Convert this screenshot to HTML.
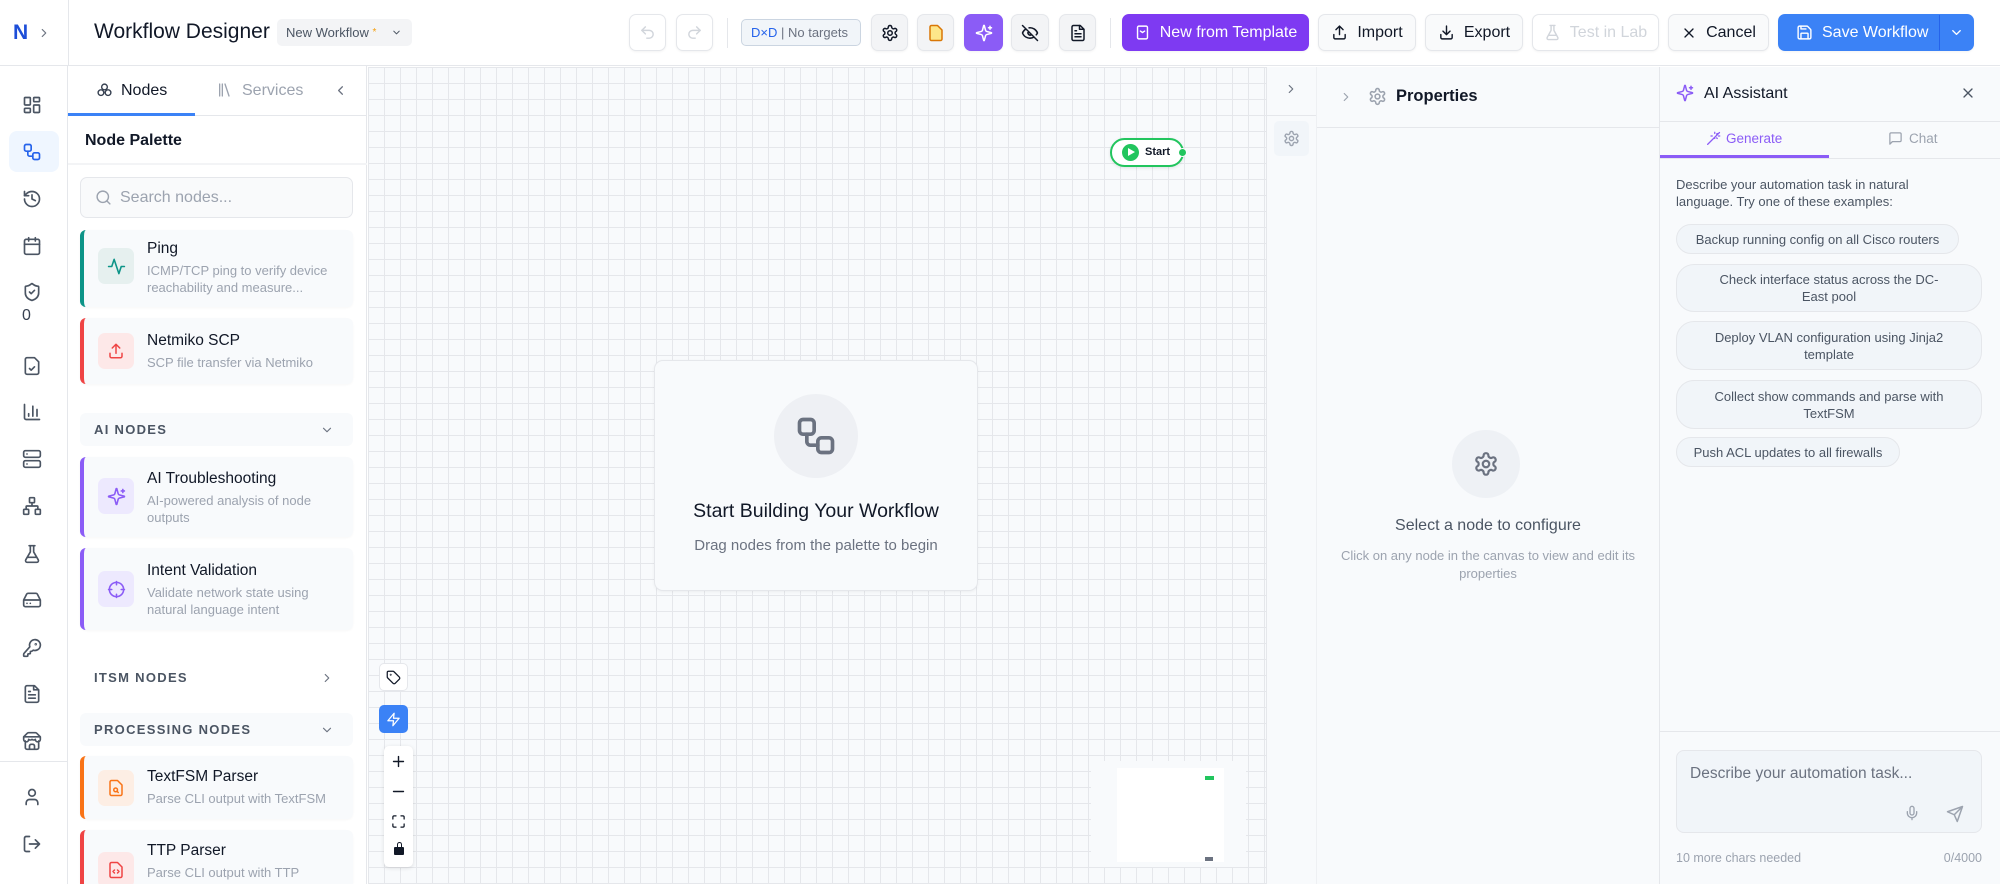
<!DOCTYPE html>
<html style="height:884px;overflow:hidden"><head><meta charset="utf-8"><style>
*{box-sizing:border-box;margin:0;padding:0}
html,body{width:2000px;height:884px;overflow:hidden}
body{font-family:"Liberation Sans",sans-serif;background:#fff;position:relative;color:#111827}
.a{position:absolute}
svg{display:block}
.ic{fill:none;stroke:currentColor;stroke-width:2;stroke-linecap:round;stroke-linejoin:round}
.hb{position:absolute;top:14px;height:37px;border:1px solid #e5e7eb;border-radius:7px;background:#f9fafb;display:flex;align-items:center;justify-content:center;color:#111827;font-size:16px;gap:9px;box-shadow:0 1px 2px rgba(0,0,0,.05)}
.rail{position:absolute;left:22px;width:20px;height:20px;color:#4b5563}
.card{position:absolute;left:80px;width:273px;background:#f8fafc;border-radius:6px;border-left:4px solid;box-shadow:0 1px 2px rgba(0,0,0,.03)}
.card .ib{position:absolute;left:14px;width:36px;height:36px;border-radius:7px;display:flex;align-items:center;justify-content:center}
.card .t{position:absolute;left:63px;font-size:15.5px;color:#111827}
.card .d{position:absolute;left:63px;font-size:13px;color:#9ca3af;line-height:17px;width:200px}
.sec{position:absolute;left:80px;width:273px;height:33px;border-radius:6px;font-size:13px;letter-spacing:1.3px;color:#4b5563;font-weight:bold;padding-left:14px;line-height:33px}
.chip{position:absolute;left:1676px;border:1px solid #e5e7eb;background:#f1f5f9;border-radius:18px;font-size:13px;color:#4b5563;text-align:center;line-height:17px;display:flex;align-items:center;justify-content:center;padding:0 12px}
.chip.w{padding:0 30px}
.cb{position:absolute;width:29px;background:#fff;border:1px solid #e5e7eb;display:flex;align-items:center;justify-content:center;color:#111827}
</style></head><body>

<!-- header -->
<div class="a" style="left:0;top:0;width:2000px;height:66px;border-bottom:1px solid #e5e7eb;background:#fff"></div>
<div class="a" style="left:68px;top:0;width:1px;height:66px;background:#e5e7eb"></div>
<div class="a" style="left:13px;top:21px;font-size:21px;font-weight:bold;color:#1d4ed8">N</div>
<svg class="a ic" style="left:37px;top:25px;color:#6b7280" width="14" height="16" viewBox="0 0 24 24"><path d="M9 6l6 6-6 6"/></svg>
<div class="a" style="left:94px;top:20px;font-size:21px;color:#111827">Workflow Designer</div>
<div class="a" style="left:277px;top:19px;width:135px;height:27px;background:#f3f4f6;border-radius:5px;font-size:13px;color:#4b5563;line-height:27px;padding-left:9px">New Workflow <span style="color:#f59e0b;font-size:10px;vertical-align:top">*</span>
<svg class="a ic" style="left:114px;top:8px" width="11" height="11" viewBox="0 0 24 24"><path d="M6 9l6 6 6-6"/></svg></div>

<div class="hb" style="left:629px;width:37px;color:#d1d5db;background:#fff"><svg class="ic" width="17" height="17" viewBox="0 0 24 24"><path d="M9 14L4 9l5-5"/><path d="M4 9h10.5a5.5 5.5 0 0 1 0 11H11"/></svg></div>
<div class="hb" style="left:676px;width:37px;color:#d1d5db;background:#fff"><svg class="ic" width="17" height="17" viewBox="0 0 24 24"><path d="M15 14l5-5-5-5"/><path d="M20 9H9.5a5.5 5.5 0 0 0 0 11H13"/></svg></div>
<div class="a" style="left:727px;top:18px;width:1px;height:30px;background:#e5e7eb"></div>
<div class="a" style="left:741px;top:19px;width:120px;height:27px;border:1px solid #cbd5e1;background:#f1f5f9;border-radius:5px;font-size:13px;line-height:25px;padding-left:9px;color:#6b7280"><span style="color:#2563eb">D×D</span> | No targets</div>
<div class="hb" style="left:871px;width:37px;background:#f3f4f6"><svg class="ic" width="18" height="18" viewBox="0 0 24 24"><circle cx="12" cy="12" r="3"/><path d="M12.2 2h-.4a2 2 0 0 0-2 2v.2a2 2 0 0 1-1 1.7l-.4.3a2 2 0 0 1-2 0l-.2-.1a2 2 0 0 0-2.7.7l-.2.4a2 2 0 0 0 .7 2.7l.2.1a2 2 0 0 1 1 1.7v.5a2 2 0 0 1-1 1.7l-.2.1a2 2 0 0 0-.7 2.7l.2.4a2 2 0 0 0 2.7.7l.2-.1a2 2 0 0 1 2 0l.4.3a2 2 0 0 1 1 1.7v.2a2 2 0 0 0 2 2h.4a2 2 0 0 0 2-2v-.2a2 2 0 0 1 1-1.7l.4-.3a2 2 0 0 1 2 0l.2.1a2 2 0 0 0 2.7-.7l.2-.4a2 2 0 0 0-.7-2.7l-.2-.1a2 2 0 0 1-1-1.7v-.5a2 2 0 0 1 1-1.7l.2-.1a2 2 0 0 0 .7-2.7l-.2-.4a2 2 0 0 0-2.7-.7l-.2.1a2 2 0 0 1-2 0l-.4-.3a2 2 0 0 1-1-1.7V4a2 2 0 0 0-2-2z"/></svg></div>
<div class="hb" style="left:917px;width:37px;background:#f3f4f6;color:#d97706"><svg class="ic" width="18" height="18" viewBox="0 0 24 24"><path d="M14 2H6a2 2 0 0 0-2 2v16a2 2 0 0 0 2 2h12a2 2 0 0 0 2-2V8z" fill="#fde68a"/></svg></div>
<div class="hb" style="left:964px;width:39px;background:#8b5cf6;border-color:#8b5cf6;color:#fff"><svg class="ic" width="18" height="18" viewBox="0 0 24 24"><path d="M9.9 15.5a2 2 0 0 0-1.4-1.4L2.4 12.5a.5.5 0 0 1 0-1l6.1-1.6a2 2 0 0 0 1.4-1.4l1.6-6.1a.5.5 0 0 1 1 0l1.6 6.1a2 2 0 0 0 1.4 1.4l6.1 1.6a.5.5 0 0 1 0 1l-6.1 1.6a2 2 0 0 0-1.4 1.4l-1.6 6.1a.5.5 0 0 1-1 0z"/><path d="M20 3v4M22 5h-4"/></svg></div>
<div class="hb" style="left:1011px;width:38px;background:#f3f4f6"><svg class="ic" width="18" height="18" viewBox="0 0 24 24"><path d="M10.7 5.1A10.7 10.7 0 0 1 22 12a10.7 10.7 0 0 1-1.7 2.4M6.6 6.6A10.7 10.7 0 0 0 2 12a10.7 10.7 0 0 0 15.4 5.4M14.1 14.2a3 3 0 0 1-4.2-4.2M2 2l20 20"/></svg></div>
<div class="hb" style="left:1059px;width:37px;background:#f3f4f6"><svg class="ic" width="18" height="18" viewBox="0 0 24 24"><path d="M15 2H6a2 2 0 0 0-2 2v16a2 2 0 0 0 2 2h12a2 2 0 0 0 2-2V7z"/><path d="M14 2v5h5M16 13H8M16 17H8M10 9H8"/></svg></div>
<div class="a" style="left:1110px;top:18px;width:1px;height:30px;background:#e5e7eb"></div>
<div class="hb" style="left:1122px;width:187px;background:#7e3af2;border-color:#7e3af2;color:#fff"><svg class="ic" width="17" height="17" viewBox="0 0 24 24"><rect x="5" y="3" width="14" height="18" rx="2"/><path d="M9 10l3 2 3-2"/></svg>New from Template</div>
<div class="hb" style="left:1318px;width:98px"><svg class="ic" width="17" height="17" viewBox="0 0 24 24"><path d="M12 15V3M7 8l5-5 5 5M4 15v4a2 2 0 0 0 2 2h12a2 2 0 0 0 2-2v-4"/></svg>Import</div>
<div class="hb" style="left:1425px;width:98px"><svg class="ic" width="17" height="17" viewBox="0 0 24 24"><path d="M12 3v12M7 10l5 5 5-5M4 15v4a2 2 0 0 0 2 2h12a2 2 0 0 0 2-2v-4"/></svg>Export</div>
<div class="hb" style="left:1532px;width:127px;background:#fff;color:#d1d5db"><svg class="ic" width="17" height="17" viewBox="0 0 24 24"><path d="M10 2v7L4.5 19a2 2 0 0 0 1.7 3h11.6a2 2 0 0 0 1.7-3L14 9V2M8.5 2h7M7 16h10"/></svg>Test in Lab</div>
<div class="hb" style="left:1668px;width:101px"><svg class="ic" width="16" height="16" viewBox="0 0 24 24"><path d="M18 6L6 18M6 6l12 12"/></svg>Cancel</div>
<div class="hb" style="left:1778px;width:196px;background:#3b82f6;border-color:#3b82f6;color:#fff;justify-content:flex-start;padding-left:17px"><svg class="ic" width="17" height="17" viewBox="0 0 24 24"><path d="M15.2 3a2 2 0 0 1 1.4.6l3.8 3.8a2 2 0 0 1 .6 1.4V19a2 2 0 0 1-2 2H5a2 2 0 0 1-2-2V5a2 2 0 0 1 2-2z"/><path d="M17 21v-7a1 1 0 0 0-1-1H8a1 1 0 0 0-1 1v7M7 3v4h7"/></svg>Save Workflow
<div class="a" style="left:160px;top:0;width:1px;height:35px;background:#2563eb"></div>
<svg class="a ic" style="left:170px;top:10px" width="15" height="15" viewBox="0 0 24 24"><path d="M6 9l6 6 6-6"/></svg></div>

<!-- left rail -->
<div class="a" style="left:0;top:66px;width:68px;height:818px;background:#fff;border-right:1px solid #e5e7eb"></div>
<div class="a" style="left:9px;top:131px;width:50px;height:41px;background:#eff6ff;border-radius:8px"></div>
<svg class="rail ic" style="top:95px" viewBox="0 0 24 24"><rect x="3" y="3" width="7" height="9" rx="1"/><rect x="14" y="3" width="7" height="5" rx="1"/><rect x="14" y="12" width="7" height="9" rx="1"/><rect x="3" y="16" width="7" height="5" rx="1"/></svg>
<svg class="rail ic" style="top:142px;color:#2563eb" viewBox="0 0 24 24"><rect x="3" y="3" width="8" height="8" rx="2"/><path d="M7 11v4a2 2 0 0 0 2 2h4"/><rect x="13" y="13" width="8" height="8" rx="2"/></svg>
<svg class="rail ic" style="top:189px" viewBox="0 0 24 24"><path d="M3 12a9 9 0 1 0 9-9 9.7 9.7 0 0 0-6.7 2.7L3 8"/><path d="M3 3v5h5M12 7v5l4 2"/></svg>
<svg class="rail ic" style="top:236px" viewBox="0 0 24 24"><rect x="3" y="4" width="18" height="18" rx="2"/><path d="M16 2v4M8 2v4M3 10h18"/></svg>
<svg class="rail ic" style="top:282px" viewBox="0 0 24 24"><path d="M20 13c0 5-3.5 7.5-7.7 9a1 1 0 0 1-.7 0C7.5 20.5 4 18 4 13V6a1 1 0 0 1 1-1c2 0 4.5-1.2 6.2-2.7a1.2 1.2 0 0 1 1.5 0C14.5 3.8 17 5 19 5a1 1 0 0 1 1 1z"/><path d="M9 12l2 2 4-4"/></svg>
<div class="a" style="left:22px;top:307px;font-size:16px;color:#374151">0</div>
<svg class="rail ic" style="top:356px" viewBox="0 0 24 24"><path d="M15 2H6a2 2 0 0 0-2 2v16a2 2 0 0 0 2 2h12a2 2 0 0 0 2-2V7z"/><path d="M9 15l2 2 4-4"/></svg>
<svg class="rail ic" style="top:402px" viewBox="0 0 24 24"><path d="M3 3v16a2 2 0 0 0 2 2h16M18 17V9M13 17V5M8 17v-3"/></svg>
<svg class="rail ic" style="top:449px" viewBox="0 0 24 24"><rect x="2" y="2" width="20" height="8" rx="2"/><rect x="2" y="14" width="20" height="8" rx="2"/><path d="M6 6h.01M6 18h.01"/></svg>
<svg class="rail ic" style="top:496px" viewBox="0 0 24 24"><rect x="16" y="16" width="6" height="6" rx="1"/><rect x="2" y="16" width="6" height="6" rx="1"/><rect x="9" y="2" width="6" height="6" rx="1"/><path d="M5 16v-3a1 1 0 0 1 1-1h12a1 1 0 0 1 1 1v3M12 12V8"/></svg>
<svg class="rail ic" style="top:544px" viewBox="0 0 24 24"><path d="M10 2v7.5L4.5 19a2 2 0 0 0 1.7 3h11.6a2 2 0 0 0 1.7-3L14 9.5V2M8.5 2h7M7 16h10"/></svg>
<svg class="rail ic" style="top:590px" viewBox="0 0 24 24"><path d="M22 12H2M5.5 5.1L2 12v6a2 2 0 0 0 2 2h16a2 2 0 0 0 2-2v-6l-3.5-6.9A2 2 0 0 0 16.8 4H7.2a2 2 0 0 0-1.7 1.1zM6 16h.01M10 16h.01"/></svg>
<svg class="rail ic" style="top:638px" viewBox="0 0 24 24"><path d="M2.6 18.2A2 2 0 0 0 2 19.6V21a1 1 0 0 0 1 1h3a1 1 0 0 0 1-1v-1a1 1 0 0 1 1-1h1a1 1 0 0 0 1-1v-1a1 1 0 0 1 1-1h.2a2 2 0 0 0 1.4-.6l.8-.8a6.5 6.5 0 1 0-4-4z"/><circle cx="16.5" cy="7.5" r=".5"/></svg>
<svg class="rail ic" style="top:684px" viewBox="0 0 24 24"><path d="M15 2H6a2 2 0 0 0-2 2v16a2 2 0 0 0 2 2h12a2 2 0 0 0 2-2V7z"/><path d="M14 2v5h5M16 13H8M16 17H8M10 9H8"/></svg>
<svg class="rail ic" style="top:731px" viewBox="0 0 24 24"><path d="M2 7l4.4-4.4A2 2 0 0 1 7.8 2h8.4a2 2 0 0 1 1.4.6L22 7M4 12v8a2 2 0 0 0 2 2h12a2 2 0 0 0 2-2v-8M15 22v-4a2 2 0 0 0-2-2h-2a2 2 0 0 0-2 2v4M2 7h20v3a3 3 0 0 1-6 0 3 3 0 0 1-4 0 3 3 0 0 1-4 0 3 3 0 0 1-6 0z"/></svg>
<div class="a" style="left:0;top:761px;width:68px;height:1px;background:#e5e7eb"></div>
<svg class="rail ic" style="top:787px" viewBox="0 0 24 24"><path d="M19 21v-2a4 4 0 0 0-4-4H9a4 4 0 0 0-4 4v2"/><circle cx="12" cy="7" r="4"/></svg>
<svg class="rail ic" style="top:834px" viewBox="0 0 24 24"><path d="M9 21H5a2 2 0 0 1-2-2V5a2 2 0 0 1 2-2h4M16 17l5-5-5-5M21 12H9"/></svg>

<!-- palette -->
<div class="a" style="left:68px;top:66px;width:299px;height:818px;background:#fff;border-right:1px solid #e5e7eb;overflow:hidden">
</div>
<div class="a" style="left:68px;top:115px;width:299px;height:1px;background:#e5e7eb"></div>
<div class="a" style="left:68px;top:113px;width:127px;height:3px;background:#3b82f6"></div>
<svg class="a ic" style="left:96px;top:82px;color:#374151" width="17" height="17" viewBox="0 0 24 24"><circle cx="12" cy="7" r="4"/><circle cx="7" cy="15" r="4"/><circle cx="17" cy="15" r="4"/></svg>
<div class="a" style="left:121px;top:82px;font-size:16px;color:#111827">Nodes</div>
<svg class="a ic" style="left:217px;top:82px;color:#9ca3af" width="16" height="16" viewBox="0 0 24 24"><path d="M4 3v18M8 3v18M12 3l6 18"/></svg>
<div class="a" style="left:242px;top:82px;font-size:16px;color:#9ca3af">Services</div>
<svg class="a ic" style="left:333px;top:83px;color:#6b7280" width="15" height="15" viewBox="0 0 24 24"><path d="M15 18l-6-6 6-6"/></svg>
<div class="a" style="left:85px;top:132px;font-size:16px;font-weight:bold;color:#111827">Node Palette</div>
<div class="a" style="left:68px;top:163px;width:299px;height:2px;background:#f3f4f6"></div>
<div class="a" style="left:80px;top:177px;width:273px;height:41px;border:1px solid #e5e7eb;border-radius:7px;background:#f9fafb"></div>
<svg class="a ic" style="left:95px;top:189px;color:#9ca3af" width="17" height="17" viewBox="0 0 24 24"><circle cx="11" cy="11" r="8"/><path d="M21 21l-4.3-4.3"/></svg>
<div class="a" style="left:120px;top:189px;font-size:16px;color:#9ca3af">Search nodes...</div>

<div class="card" style="top:230px;height:77px;border-color:#0d9488"><div class="ib" style="top:18px;background:#e6f0ef;color:#0d9488"><svg class="ic" width="19" height="19" viewBox="0 0 24 24"><path d="M22 12h-4l-3 9L9 3l-3 9H2"/></svg></div><div class="t" style="top:10px">Ping</div><div class="d" style="top:32px">ICMP/TCP ping to verify device reachability and measure...</div></div>
<div class="card" style="top:318px;height:66px;border-color:#ef4444"><div class="ib" style="top:15px;background:#fde8e8;color:#ef4444"><svg class="ic" width="18" height="18" viewBox="0 0 24 24"><path d="M12 15V3M7 8l5-5 5 5M4 15v4a2 2 0 0 0 2 2h12a2 2 0 0 0 2-2v-4"/></svg></div><div class="t" style="top:14px">Netmiko SCP</div><div class="d" style="top:36px">SCP file transfer via Netmiko</div></div>
<div class="sec" style="top:413px;background:#f8fafc">AI NODES<svg class="a ic" style="left:240px;top:10px;color:#6b7280" width="14" height="14" viewBox="0 0 24 24"><path d="M6 9l6 6 6-6"/></svg></div>
<div class="card" style="top:457px;height:80px;border-color:#8b5cf6"><div class="ib" style="top:21px;background:#ede9fe;color:#8b5cf6"><svg class="ic" width="19" height="19" viewBox="0 0 24 24"><path d="M9.9 15.5a2 2 0 0 0-1.4-1.4L2.4 12.5a.5.5 0 0 1 0-1l6.1-1.6a2 2 0 0 0 1.4-1.4l1.6-6.1a.5.5 0 0 1 1 0l1.6 6.1a2 2 0 0 0 1.4 1.4l6.1 1.6a.5.5 0 0 1 0 1l-6.1 1.6a2 2 0 0 0-1.4 1.4l-1.6 6.1a.5.5 0 0 1-1 0z"/><path d="M20 3v4M22 5h-4"/></svg></div><div class="t" style="top:13px">AI Troubleshooting</div><div class="d" style="top:35px">AI-powered analysis of node outputs</div></div>
<div class="card" style="top:548px;height:82px;border-color:#8b5cf6"><div class="ib" style="top:23px;background:#ede9fe;color:#8b5cf6"><svg class="ic" width="19" height="19" viewBox="0 0 24 24"><circle cx="12" cy="12" r="9"/><path d="M22 12h-4M6 12H2M12 6V2M12 22v-4"/></svg></div><div class="t" style="top:14px">Intent Validation</div><div class="d" style="top:36px">Validate network state using natural language intent</div></div>
<div class="sec" style="top:661px">ITSM NODES<svg class="a ic" style="left:240px;top:10px;color:#6b7280" width="14" height="14" viewBox="0 0 24 24"><path d="M9 6l6 6-6 6"/></svg></div>
<div class="sec" style="top:713px;background:#f8fafc">PROCESSING NODES<svg class="a ic" style="left:240px;top:10px;color:#6b7280" width="14" height="14" viewBox="0 0 24 24"><path d="M6 9l6 6 6-6"/></svg></div>
<div class="card" style="top:756px;height:63px;border-color:#f97316"><div class="ib" style="top:14px;background:#fdeee4;color:#f97316"><svg class="ic" width="18" height="18" viewBox="0 0 24 24"><path d="M14 2H6a2 2 0 0 0-2 2v16a2 2 0 0 0 2 2h12a2 2 0 0 0 2-2V8z"/><circle cx="11.5" cy="14.5" r="2.5"/><path d="M13.3 16.3L15 18"/></svg></div><div class="t" style="top:12px">TextFSM Parser</div><div class="d" style="top:34px">Parse CLI output with TextFSM</div></div>
<div class="card" style="top:830px;height:54px;border-color:#ef4444;border-radius:6px 6px 0 0;overflow:hidden"><div class="ib" style="top:22px;background:#fde8e8;color:#ef4444"><svg class="ic" width="18" height="18" viewBox="0 0 24 24"><path d="M14 2H6a2 2 0 0 0-2 2v16a2 2 0 0 0 2 2h12a2 2 0 0 0 2-2V8z"/><path d="M10 12l-2 2 2 2M14 12l2 2-2 2"/></svg></div><div class="t" style="top:12px">TTP Parser</div><div class="d" style="top:34px">Parse CLI output with TTP</div></div>

<!-- canvas -->
<div class="a" style="left:368px;top:67px;width:898px;height:817px;background-color:#f8fafc;background-image:linear-gradient(#e5e7eb 1px,transparent 1px),linear-gradient(90deg,#e5e7eb 1px,transparent 1px);background-size:16px 16px"></div>
<div class="a" style="left:1110px;top:138px;width:74px;height:29px;border:2px solid #22c55e;border-radius:15px;background:#fff;box-shadow:0 1px 3px rgba(0,0,0,.1)"></div>
<div class="a" style="left:1122px;top:144px;width:17px;height:17px;border-radius:50%;background:#22c55e"></div>
<div class="a" style="left:1128px;top:148px;width:0;height:0;border-left:7px solid #fff;border-top:4.5px solid transparent;border-bottom:4.5px solid transparent"></div>
<div class="a" style="left:1145px;top:146px;font-size:11px;line-height:13px;font-weight:bold;color:#111827">Start</div>
<div class="a" style="left:1178px;top:148px;width:9px;height:9px;border-radius:50%;background:#22c55e;border:1px solid #fff"></div>

<div class="a" style="left:654px;top:360px;width:324px;height:231px;background:#f8fafc;border:1px solid #e5e7eb;border-radius:9px;box-shadow:0 1px 3px rgba(0,0,0,.05)"></div>
<div class="a" style="left:774px;top:394px;width:84px;height:84px;border-radius:50%;background:#eef0f4"></div>
<svg class="a ic" style="left:794px;top:414px;color:#6b7280" width="44" height="44" viewBox="0 0 24 24"><rect x="3" y="3" width="8" height="8" rx="2"/><path d="M7 11v4a2 2 0 0 0 2 2h4"/><rect x="13" y="13" width="8" height="8" rx="2"/></svg>
<div class="a" style="left:654px;top:500px;width:324px;text-align:center;font-size:19.5px;color:#111827">Start Building Your Workflow</div>
<div class="a" style="left:654px;top:537px;width:324px;text-align:center;font-size:15px;color:#6b7280">Drag nodes from the palette to begin</div>

<div class="cb" style="left:379px;top:663px;height:28px;border-radius:5px"><svg class="ic" width="15" height="15" viewBox="0 0 24 24"><path d="M12.6 2.6A2 2 0 0 0 11.2 2H4a2 2 0 0 0-2 2v7.2a2 2 0 0 0 .6 1.4l8.7 8.7a2.4 2.4 0 0 0 3.4 0l6.6-6.6a2.4 2.4 0 0 0 0-3.4z"/><circle cx="7.5" cy="7.5" r=".5"/></svg></div>
<div class="cb" style="left:379px;top:705px;height:28px;border-radius:5px;background:#3b82f6;border-color:#3b82f6;color:#fff"><svg class="ic" width="15" height="15" viewBox="0 0 24 24"><path d="M13 2L3 14h9l-1 8 10-12h-9z"/></svg></div>
<div class="a" style="left:384px;top:746px;width:29px;height:121px;background:#fff;border-radius:5px;box-shadow:0 1px 4px rgba(0,0,0,.12)"></div>
<svg class="a ic" style="left:390px;top:753px" width="17" height="17" viewBox="0 0 24 24"><path d="M12 5v14M5 12h14"/></svg>
<svg class="a ic" style="left:390px;top:783px" width="17" height="17" viewBox="0 0 24 24"><path d="M5 12h14"/></svg>
<svg class="a ic" style="left:391px;top:814px" width="15" height="15" viewBox="0 0 24 24"><path d="M3 8V5a2 2 0 0 1 2-2h3M16 3h3a2 2 0 0 1 2 2v3M21 16v3a2 2 0 0 1-2 2h-3M8 21H5a2 2 0 0 1-2-2v-3"/></svg>
<div class="a" style="left:394px;top:847px;width:10px;height:8px;background:#111827;border-radius:1px"></div>
<div class="a" style="left:397px;top:842px;width:5px;height:6px;border:1.5px solid #111827;border-bottom:none;border-radius:3px 3px 0 0"></div>
<div class="a" style="left:1091px;top:761px;width:155px;height:106px;background:#f8fafc;border-radius:3px"></div>
<div class="a" style="left:1117px;top:768px;width:107px;height:94px;background:#fff"></div>
<div class="a" style="left:1205px;top:776px;width:9px;height:4px;background:#22c55e"></div>
<div class="a" style="left:1205px;top:857px;width:8px;height:4px;background:#6b7280"></div>

<!-- properties -->
<div class="a" style="left:1266px;top:67px;width:393px;height:817px;background:#f8fafc;border-left:1px solid #e5e7eb"></div>
<div class="a" style="left:1316px;top:67px;width:1px;height:817px;background:#eef0f3"></div>
<svg class="a ic" style="left:1284px;top:82px;color:#6b7280" width="14" height="14" viewBox="0 0 24 24"><path d="M9 6l6 6-6 6"/></svg>
<div class="a" style="left:1267px;top:115px;width:49px;height:1px;background:#e5e7eb"></div>
<div class="a" style="left:1274px;top:121px;width:35px;height:35px;background:#f1f5f9;border-radius:5px"></div>
<svg class="a ic" style="left:1283px;top:130px;color:#9ca3af" width="17" height="17" viewBox="0 0 24 24"><circle cx="12" cy="12" r="3"/><path d="M12.2 2h-.4a2 2 0 0 0-2 2v.2a2 2 0 0 1-1 1.7l-.4.3a2 2 0 0 1-2 0l-.2-.1a2 2 0 0 0-2.7.7l-.2.4a2 2 0 0 0 .7 2.7l.2.1a2 2 0 0 1 1 1.7v.5a2 2 0 0 1-1 1.7l-.2.1a2 2 0 0 0-.7 2.7l.2.4a2 2 0 0 0 2.7.7l.2-.1a2 2 0 0 1 2 0l.4.3a2 2 0 0 1 1 1.7v.2a2 2 0 0 0 2 2h.4a2 2 0 0 0 2-2v-.2a2 2 0 0 1 1-1.7l.4-.3a2 2 0 0 1 2 0l.2.1a2 2 0 0 0 2.7-.7l.2-.4a2 2 0 0 0-.7-2.7l-.2-.1a2 2 0 0 1-1-1.7v-.5a2 2 0 0 1 1-1.7l.2-.1a2 2 0 0 0 .7-2.7l-.2-.4a2 2 0 0 0-2.7-.7l-.2.1a2 2 0 0 1-2 0l-.4-.3a2 2 0 0 1-1-1.7V4a2 2 0 0 0-2-2z"/></svg>
<svg class="a ic" style="left:1339px;top:90px;color:#9ca3af" width="14" height="14" viewBox="0 0 24 24"><path d="M9 6l6 6-6 6"/></svg>
<svg class="a ic" style="left:1368px;top:87px;color:#9ca3af" width="19" height="19" viewBox="0 0 24 24"><circle cx="12" cy="12" r="3"/><path d="M12.2 2h-.4a2 2 0 0 0-2 2v.2a2 2 0 0 1-1 1.7l-.4.3a2 2 0 0 1-2 0l-.2-.1a2 2 0 0 0-2.7.7l-.2.4a2 2 0 0 0 .7 2.7l.2.1a2 2 0 0 1 1 1.7v.5a2 2 0 0 1-1 1.7l-.2.1a2 2 0 0 0-.7 2.7l.2.4a2 2 0 0 0 2.7.7l.2-.1a2 2 0 0 1 2 0l.4.3a2 2 0 0 1 1 1.7v.2a2 2 0 0 0 2 2h.4a2 2 0 0 0 2-2v-.2a2 2 0 0 1 1-1.7l.4-.3a2 2 0 0 1 2 0l.2.1a2 2 0 0 0 2.7-.7l.2-.4a2 2 0 0 0-.7-2.7l-.2-.1a2 2 0 0 1-1-1.7v-.5a2 2 0 0 1 1-1.7l.2-.1a2 2 0 0 0 .7-2.7l-.2-.4a2 2 0 0 0-2.7-.7l-.2.1a2 2 0 0 1-2 0l-.4-.3a2 2 0 0 1-1-1.7V4a2 2 0 0 0-2-2z"/></svg>
<div class="a" style="left:1396px;top:87px;font-size:16.5px;font-weight:bold;color:#111827">Properties</div>
<div class="a" style="left:1317px;top:127px;width:342px;height:1px;background:#e5e7eb"></div>
<div class="a" style="left:1452px;top:430px;width:68px;height:68px;border-radius:50%;background:#eef1f5"></div>
<svg class="a ic" style="left:1473px;top:451px;color:#6b7280" width="26" height="26" viewBox="0 0 24 24"><circle cx="12" cy="12" r="3"/><path d="M12.2 2h-.4a2 2 0 0 0-2 2v.2a2 2 0 0 1-1 1.7l-.4.3a2 2 0 0 1-2 0l-.2-.1a2 2 0 0 0-2.7.7l-.2.4a2 2 0 0 0 .7 2.7l.2.1a2 2 0 0 1 1 1.7v.5a2 2 0 0 1-1 1.7l-.2.1a2 2 0 0 0-.7 2.7l.2.4a2 2 0 0 0 2.7.7l.2-.1a2 2 0 0 1 2 0l.4.3a2 2 0 0 1 1 1.7v.2a2 2 0 0 0 2 2h.4a2 2 0 0 0 2-2v-.2a2 2 0 0 1 1-1.7l.4-.3a2 2 0 0 1 2 0l.2.1a2 2 0 0 0 2.7-.7l.2-.4a2 2 0 0 0-.7-2.7l-.2-.1a2 2 0 0 1-1-1.7v-.5a2 2 0 0 1 1-1.7l.2-.1a2 2 0 0 0 .7-2.7l-.2-.4a2 2 0 0 0-2.7-.7l-.2.1a2 2 0 0 1-2 0l-.4-.3a2 2 0 0 1-1-1.7V4a2 2 0 0 0-2-2z"/></svg>
<div class="a" style="left:1317px;top:517px;width:342px;text-align:center;font-size:16px;color:#4b5563">Select a node to configure</div>
<div class="a" style="left:1320px;top:547px;width:336px;text-align:center;font-size:13px;line-height:18px;color:#9ca3af">Click on any node in the canvas to view and edit its properties</div>

<!-- AI assistant -->
<div class="a" style="left:1659px;top:67px;width:341px;height:817px;background:#f8fafc;border-left:1px solid #e5e7eb"></div>
<svg class="a ic" style="left:1676px;top:84px;color:#8b5cf6" width="18" height="18" viewBox="0 0 24 24"><path d="M9.9 15.5a2 2 0 0 0-1.4-1.4L2.4 12.5a.5.5 0 0 1 0-1l6.1-1.6a2 2 0 0 0 1.4-1.4l1.6-6.1a.5.5 0 0 1 1 0l1.6 6.1a2 2 0 0 0 1.4 1.4l6.1 1.6a.5.5 0 0 1 0 1l-6.1 1.6a2 2 0 0 0-1.4 1.4l-1.6 6.1a.5.5 0 0 1-1 0z"/><path d="M20 3v4M22 5h-4"/></svg>
<div class="a" style="left:1704px;top:85px;font-size:16px;color:#111827">AI Assistant</div>
<svg class="a ic" style="left:1960px;top:85px;color:#4b5563" width="16" height="16" viewBox="0 0 24 24"><path d="M18 6L6 18M6 6l12 12"/></svg>
<div class="a" style="left:1660px;top:121px;width:340px;height:1px;background:#e5e7eb"></div>
<div class="a" style="left:1660px;top:158px;width:340px;height:1px;background:#e5e7eb"></div>
<div class="a" style="left:1660px;top:155px;width:169px;height:3px;background:#8b5cf6"></div>
<svg class="a ic" style="left:1706px;top:131px;color:#8b5cf6" width="15" height="15" viewBox="0 0 24 24"><path d="M21.6 2.4l-19 19M14 4V2M14 12v-2M20 8h2M10 8H8M17 5l1-1M17 11l1 1"/></svg>
<div class="a" style="left:1726px;top:131px;font-size:13.5px;color:#8b5cf6">Generate</div>
<svg class="a ic" style="left:1888px;top:131px;color:#9ca3af" width="15" height="15" viewBox="0 0 24 24"><path d="M21 15a2 2 0 0 1-2 2H7l-4 4V5a2 2 0 0 1 2-2h14a2 2 0 0 1 2 2z"/></svg>
<div class="a" style="left:1909px;top:131px;font-size:13.5px;color:#9ca3af">Chat</div>
<div class="a" style="left:1676px;top:176px;width:262px;font-size:13px;line-height:17px;color:#4b5563">Describe your automation task in natural language. Try one of these examples:</div>
<div class="chip" style="top:224px;width:283px;height:30px">Backup running config on all Cisco routers</div>
<div class="chip w" style="top:264px;width:306px;height:48px">Check interface status across the DC-East pool</div>
<div class="chip w" style="top:321px;width:306px;height:49px">Deploy VLAN configuration using Jinja2 template</div>
<div class="chip w" style="top:380px;width:306px;height:49px">Collect show commands and parse with TextFSM</div>
<div class="chip" style="top:437px;width:224px;height:30px">Push ACL updates to all firewalls</div>
<div class="a" style="left:1660px;top:731px;width:340px;height:1px;background:#e5e7eb"></div>
<div class="a" style="left:1676px;top:750px;width:306px;height:83px;background:#f1f5f9;border:1px solid #e5e7eb;border-radius:8px"></div>
<div class="a" style="left:1690px;top:765px;font-size:15.5px;color:#6b7280">Describe your automation task...</div>
<svg class="a ic" style="left:1904px;top:805px;color:#9ca3af" width="16" height="16" viewBox="0 0 24 24"><rect x="9" y="2" width="6" height="13" rx="3"/><path d="M19 10v2a7 7 0 0 1-14 0v-2M12 19v3"/></svg>
<svg class="a ic" style="left:1946px;top:805px;color:#9ca3af" width="18" height="18" viewBox="0 0 24 24"><path d="M22 2L11 13M22 2l-7 20-4-9-9-4z"/></svg>
<div class="a" style="left:1676px;top:851px;font-size:12.5px;color:#9ca3af">10 more chars needed</div>
<div class="a" style="left:1900px;top:851px;width:82px;text-align:right;font-size:12.5px;color:#9ca3af">0/4000</div>
</body></html>
